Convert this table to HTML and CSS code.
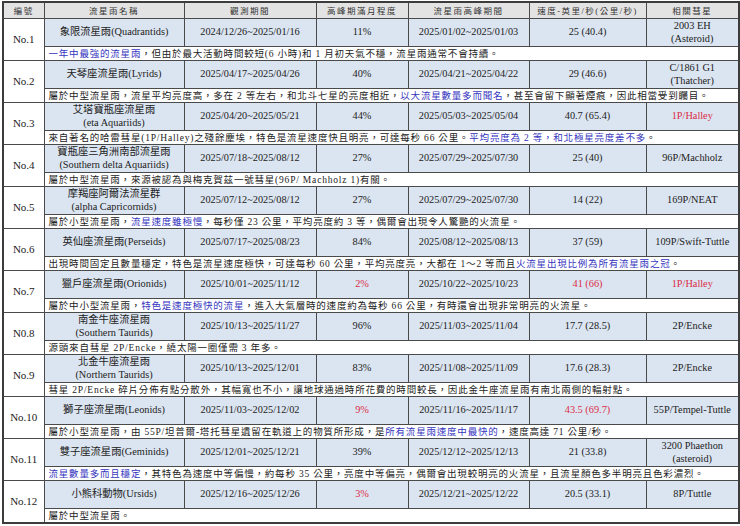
FILE: index.html
```html
<!DOCTYPE html>
<html lang="zh-Hant">
<head>
<meta charset="utf-8">
<title>2025 流星雨</title>
<link rel="stylesheet" href="styles.css">
</head>
<body>
<table class="meteor">
  <colgroup>
    <col class="c1"><col class="c2"><col class="c3"><col class="c4"><col class="c5"><col class="c6"><col class="c7">
  </colgroup>
  <thead>
    <tr><th>編號</th><th>流星雨名稱</th><th>觀測期間</th><th>高峰期滿月程度</th><th>流星雨高峰期間</th><th>速度-英里/秒(公里/秒)</th><th>相關彗星</th></tr>
  </thead>
  <tbody>
    <tr class="data"><td class="num" rowspan="2">No.1</td><td>象限流星雨(Quadrantids)</td><td>2024/12/26~2025/01/16</td><td>11%</td><td>2025/01/02~2025/01/03</td><td>25 (40.4)</td><td>2003 EH<br>(Asteroid)</td></tr>
    <tr class="desc"><td colspan="6"><span class="blue">一年中最強的流星雨</span>，但由於最大活動時間較短(6 小時)和 1 月初天氣不穩，流星雨通常不會持續。</td></tr>

    <tr class="data"><td class="num" rowspan="2">No.2</td><td>天琴座流星雨(Lyrids)</td><td>2025/04/17~2025/04/26</td><td>40%</td><td>2025/04/21~2025/04/22</td><td>29 (46.6)</td><td>C/1861 G1<br>(Thatcher)</td></tr>
    <tr class="desc"><td colspan="6">屬於中型流星雨，流星平均亮度高，多在 2 等左右，和北斗七星的亮度相近，<span class="blue">以大流星數量多而聞名</span>，甚至會留下顯著煙痕，因此相當受到矚目。</td></tr>

    <tr class="data"><td class="num" rowspan="2">No.3</td><td>艾塔寶瓶座流星雨<br>(eta Aquariids)</td><td>2025/04/20~2025/05/21</td><td>44%</td><td>2025/05/03~2025/05/04</td><td>40.7 (65.4)</td><td class="red">1P/Halley</td></tr>
    <tr class="desc"><td colspan="6">來自著名的哈雷彗星(1P/Halley)之殘餘塵埃，特色是流星速度快且明亮，可達每秒 66 公里。<span class="blue">平均亮度為 2 等，和北極星亮度差不多</span>。</td></tr>

    <tr class="data"><td class="num" rowspan="2">No.4</td><td>寶瓶座三角洲南部流星雨<br>(Southern delta Aquariids)</td><td>2025/07/18~2025/08/12</td><td>27%</td><td>2025/07/29~2025/07/30</td><td>25 (40)</td><td>96P/Machholz</td></tr>
    <tr class="desc"><td colspan="6">屬於中型流星雨，來源被認為與梅克賀茲一號彗星(96P/ Machholz 1)有關。</td></tr>

    <tr class="data"><td class="num" rowspan="2">No.5</td><td>摩羯座阿爾法流星群<br>(alpha Capricornids)</td><td>2025/07/12~2025/08/12</td><td>27%</td><td>2025/07/29~2025/07/30</td><td>14 (22)</td><td>169P/NEAT</td></tr>
    <tr class="desc"><td colspan="6">屬於小型流星雨，<span class="blue">流星速度雖極慢</span>，每秒僅 23 公里，平均亮度約 3 等，偶爾會出現令人驚艷的火流星。</td></tr>

    <tr class="data"><td class="num" rowspan="2">No.6</td><td>英仙座流星雨(Perseids)</td><td>2025/07/17~2025/08/23</td><td>84%</td><td>2025/08/12~2025/08/13</td><td>37 (59)</td><td>109P/Swift-Tuttle</td></tr>
    <tr class="desc"><td colspan="6">出現時間固定且數量穩定，特色是流星速度極快，可達每秒 60 公里，平均亮度亮，大都在 1～2 等而且<span class="blue">火流星出現比例為所有流星雨之冠</span>。</td></tr>

    <tr class="data"><td class="num" rowspan="2">No.7</td><td>獵戶座流星雨(Orionids)</td><td>2025/10/01~2025/11/12</td><td class="red">2%</td><td>2025/10/22~2025/10/23</td><td class="red">41 (66)</td><td class="red">1P/Halley</td></tr>
    <tr class="desc"><td colspan="6">屬於中小型流星雨，<span class="blue">特色是速度極快的流星</span>，進入大氣層時的速度約為每秒 66 公里，有時還會出現非常明亮的火流星。</td></tr>

    <tr class="data"><td class="num" rowspan="2">N0.8</td><td>南金牛座流星雨<br>(Southern Taurids)</td><td>2025/10/13~2025/11/27</td><td>96%</td><td>2025/11/03~2025/11/04</td><td>17.7 (28.5)</td><td>2P/Encke</td></tr>
    <tr class="desc"><td colspan="6">源頭來自彗星 2P/Encke，繞太陽一圈僅需 3 年多。</td></tr>

    <tr class="data"><td class="num" rowspan="2">No.9</td><td>北金牛座流星雨<br>(Northern Taurids)</td><td>2025/10/13~2025/12/01</td><td>83%</td><td>2025/11/08~2025/11/09</td><td>17.6 (28.3)</td><td>2P/Encke</td></tr>
    <tr class="desc"><td colspan="6">彗星 2P/Encke 碎片分佈有點分散外，其幅寬也不小，讓地球通過時所花費的時間較長，因此金牛座流星雨有南北兩側的輻射點。</td></tr>

    <tr class="data"><td class="num" rowspan="2">No.10</td><td>獅子座流星雨(Leonids)</td><td>2025/11/03~2025/12/02</td><td class="red">9%</td><td>2025/11/16~2025/11/17</td><td class="red">43.5 (69.7)</td><td>55P/Tempel-Tuttle</td></tr>
    <tr class="desc"><td colspan="6">屬於小型流星雨，由 55P/坦普爾-塔托彗星遺留在軌道上的物質所形成，是<span class="blue">所有流星雨速度中最快的</span>，速度高達 71 公里/秒。</td></tr>

    <tr class="data"><td class="num" rowspan="2">No.11</td><td>雙子座流星雨(Geminids)</td><td>2025/12/01~2025/12/21</td><td>39%</td><td>2025/12/12~2025/12/13</td><td>21 (33.8)</td><td>3200 Phaethon<br>(asteroid)</td></tr>
    <tr class="desc"><td colspan="6"><span class="blue">流星數量多而且穩定</span>，其特色為速度中等偏慢，約每秒 35 公里，亮度中等偏亮，偶爾會出現較明亮的火流星，且流星顏色多半明亮且色彩濃烈。</td></tr>

    <tr class="data"><td class="num" rowspan="2">No.12</td><td>小熊科動物(Ursids)</td><td>2025/12/16~2025/12/26</td><td class="red">3%</td><td>2025/12/21~2025/12/22</td><td>20.5 (33.1)</td><td>8P/Tuttle</td></tr>
    <tr class="desc"><td colspan="6">屬於中型流星雨。</td></tr>
  </tbody>
</table>
</body>
</html>
```
FILE: styles.css
```css
html, body {
  margin: 0;
  padding: 0;
  background: #ffffff;
}
body {
  padding: 1px 2px 0 2px;
  font-family: "Liberation Serif", "Noto Sans CJK TC", serif;
  color: #222222;
}
.meteor {
  border-collapse: collapse;
  table-layout: fixed;
  width: 736px;
  border: 2px solid #3c3c3c;
}
.c1 { width: 41px; }
.c2 { width: 140px; }
.c3 { width: 132px; }
.c4 { width: 92px; }
.c5 { width: 121px; }
.c6 { width: 117px; }
.c7 { width: 93px; }

.meteor th,
.meteor td {
  border: 1px solid #4a4a4a;
  padding: 0;
  text-align: center;
  vertical-align: middle;
  white-space: nowrap;
  overflow: hidden;
}
.meteor th {
  background: #e3e3e3;
  height: 15px;
  font-size: 8.5px;
  font-weight: normal;
  line-height: 14px;
  letter-spacing: 1.5px;
  color: #333333;
}
.data td {
  background: #dbe5f1;
  height: 27px;
  font-size: 10.3px;
  line-height: 12.5px;
}
.data td.num {
  background: #ffffff;
  font-size: 11px;
}
.desc td {
  height: 13px;
  font-size: 9.5px;
  line-height: 12px;
  text-align: left;
  padding-left: 4px;
  letter-spacing: 0.8px;
  background: #ffffff;
}
.blue { color: #3535c0; }
.red { color: #dc2c48; }
```
